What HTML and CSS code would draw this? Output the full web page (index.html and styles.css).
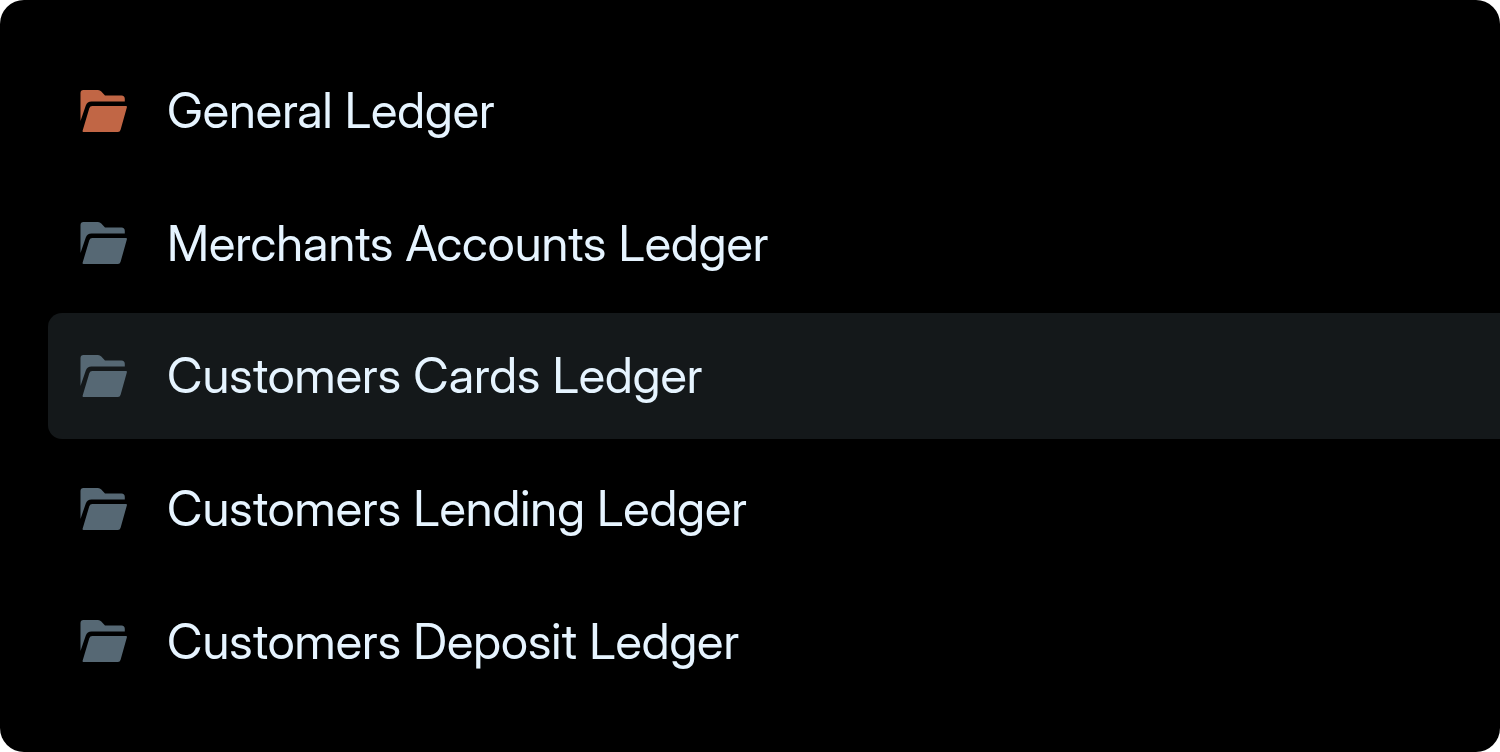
FILE: index.html
```html
<!DOCTYPE html>
<html lang="en">
<head>
    <meta charset="UTF-8">
    <meta name="viewport" content="width=device-width, initial-scale=1.0">
    <title>Ledgers</title>
    <link rel="stylesheet" href="styles.css">
</head>
<body>
    <!-- shared folder icon -->
    <svg class="sprite" aria-hidden="true">
        <symbol id="folder" viewBox="0 0 48 44">
            <path d="M.5 32V4Q.5 1 3.500 1H18Q20 1 21.300 2.500L25 6.500H41.500Q44.800 6.500 44.800 10V12.500H11.500Q7.200 12.500 5.800 16.500Z"/>
            <path d="M12.300 17H46Q47.200 17 46.900 18.200L40.600 40.800Q40 43 37.900 43H3.500Q2.300 43 2.600 41.700L9.300 19.200Q10 17 12.300 17Z"/>
        </symbol>
    </svg>

    <nav class="panel" aria-label="Ledgers">
        <ul class="ledgers">
            <li><a class="ledger general" href="#general"><svg class="icon" aria-hidden="true"><use href="#folder"/></svg>General Ledger</a></li>
            <li><a class="ledger" href="#merchants"><svg class="icon" aria-hidden="true"><use href="#folder"/></svg>Merchants Accounts Ledger</a></li>
            <li><a class="ledger active" href="#cards" aria-current="page"><svg class="icon" aria-hidden="true"><use href="#folder"/></svg>Customers Cards Ledger</a></li>
            <li><a class="ledger" href="#lending"><svg class="icon" aria-hidden="true"><use href="#folder"/></svg>Customers Lending Ledger</a></li>
            <li><a class="ledger" href="#deposit"><svg class="icon" aria-hidden="true"><use href="#folder"/></svg>Customers Deposit Ledger</a></li>
        </ul>
    </nav>
</body>
</html>
```
FILE: styles.css
```css
* {
    box-sizing: border-box;
}

body {
    margin: 0;
    background-color: white;
    font-family: "Inter Display", Inter, sans-serif;
}

.sprite {
    display: none;
}

.panel {
    display: flex;
    min-height: 100vh;
    padding: 48px 0 48px 48px;
    background-color: #000;
    border-radius: 24px;
}

/* rows share the height of the panel */
.ledgers {
    flex: 1;
    display: flex;
    flex-direction: column;
    gap: 7px;
    margin: 0;
    padding: 0;
    list-style: none;
}

.ledgers li {
    flex: 1;
    display: flex;
}

.ledger {
    flex: 1;
    display: flex;
    align-items: center;
    gap: 39px;
    padding: 0 32px;
    border-radius: 14px 0 0 14px;
    color: #e6f4ff;
    font-size: 49px;
    font-weight: 400;
    line-height: 61px;
    text-decoration: none;
}

.ledger:hover,
.ledger.active {
    background-color: #14181a;
}

.icon {
    flex: none;
    width: 48px;
    height: 44px;
    fill: #566874;
}

.general .icon {
    fill: #c16645;
}
```
